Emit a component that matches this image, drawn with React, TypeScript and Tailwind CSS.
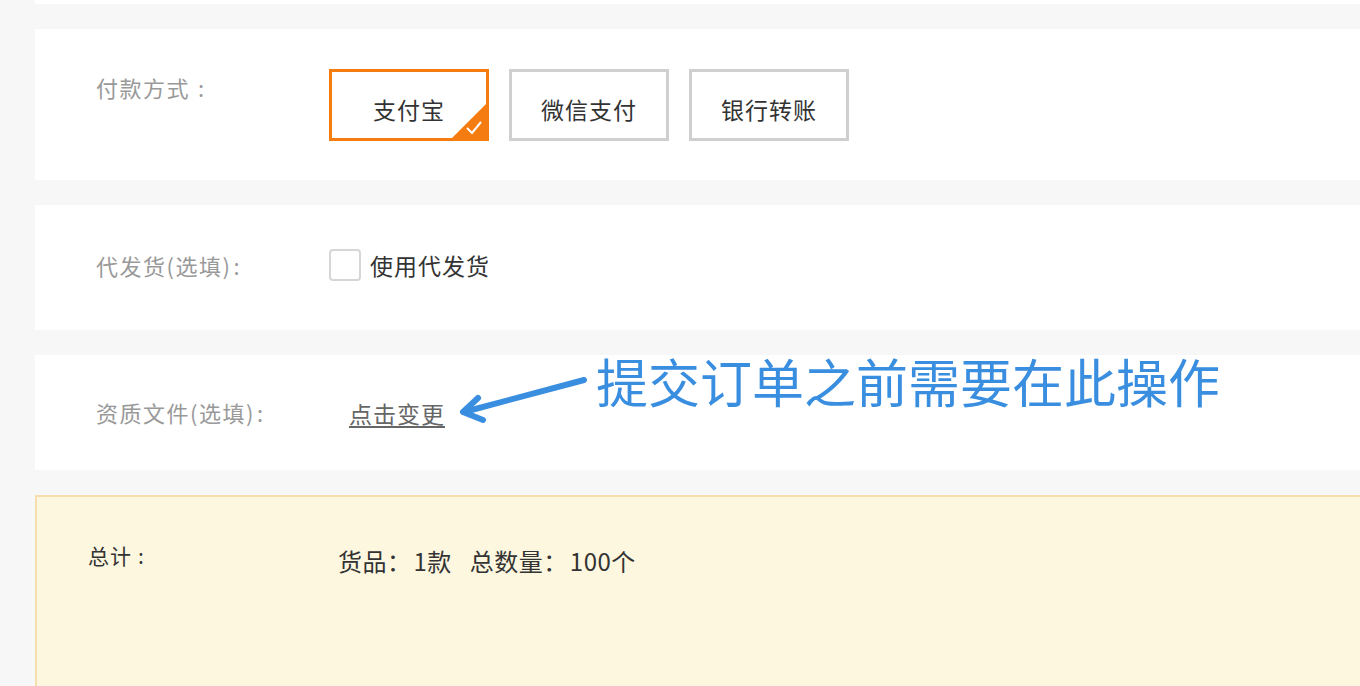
import React from 'react';

const font = { fontFamily: '"PingFang SC", "Noto Sans CJK SC", "Noto Sans", sans-serif' };

const PayOption = ({ label, active }: { label: string; active?: boolean }) => (
    <div
        className={`relative flex h-[72px] w-[160px] items-center justify-center pt-[8px] text-[23px] tracking-[1px] text-[#333] ${
            active ? 'border-[3px] border-[#f47c10]' : 'border-[3px] border-[#cfcfcf]'
        }`}
    >
        {label}
        {active && (
            <svg className="absolute bottom-0 right-0" width="34" height="34" viewBox="0 0 34 34">
                <polygon points="34,0 34,34 0,34" fill="#f47c10" />
                <path d="M15 24 L20 29 L29 18" stroke="#fff" strokeWidth="2" fill="none" />
            </svg>
        )}
    </div>
);

const Label = ({ text, colon = 'ml-[2px]' }: { text: string; colon?: string }) => (
    <div className="w-[294px] shrink-0 pl-[61px] text-[22px] tracking-[1.5px] text-[#999]">
        {text}
        <span className={colon}>:</span>
    </div>
);

export default function App() {
    return (
        <div className="relative min-h-[686px] overflow-hidden bg-[#f7f7f7] pl-[35px]" style={font}>
            <div className="h-[4px] bg-white" />

            <div className="mt-[25px] flex h-[151px] items-start bg-white">
                <div className="pt-[42px]">
                    <Label text="付款方式" colon="ml-[8px]" />
                </div>
                <div className="flex gap-[20px] pt-[40px]">
                    <PayOption label="支付宝" active />
                    <PayOption label="微信支付" />
                    <PayOption label="银行转账" />
                </div>
            </div>

            <div className="mt-[25px] flex h-[125px] items-center bg-white pb-[5px]">
                <Label text="代发货(选填)" />
                <label className="flex items-center gap-[9px] text-[23px] tracking-[1px] text-[#333]">
                    <span className="block h-[32px] w-[32px] rounded-[4px] border-2 border-[#d6d6d6] bg-white" />
                    使用代发货
                </label>
            </div>

            <div className="mt-[25px] flex h-[115px] items-center bg-white">
                <Label text="资质文件(选填)" />
                <a className="ml-[20px] mt-[2px] text-[23px] tracking-[1px] text-[#666] underline underline-offset-[3px]">
                    点击变更
                </a>
            </div>

            <div className="mt-[25px] h-[200px] border-l-2 border-t-2 border-[#f5dfae] bg-[#fdf7e0]">
                <div className="flex items-start pt-[43px]">
                    <div className="w-[301px] shrink-0 pl-[51px] text-[21px] tracking-[1px] text-[#333]">
                        总计<span className="ml-[6px]">:</span>
                    </div>
                    <div className="pt-[3px] text-[24px] tracking-[0.5px] text-[#333]">
                        货品：<span className="ml-[2px]">1款</span>
                        <span className="inline-block w-[18px]" />总数量：<span className="ml-[2px]">100个</span>
                    </div>
                </div>
            </div>

            <div className="absolute left-[596px] top-[346px] text-[52px] leading-[70px] text-[#3a8ee0]">
                提交订单之前需要在此操作
            </div>
            <svg className="absolute left-[450px] top-[370px]" width="150" height="60" viewBox="0 0 150 60">
                <path d="M134 10 L14 42" stroke="#3a8ee0" strokeWidth="6" strokeLinecap="round" fill="none" />
                <path d="M28 28 L13 42 L33 50" stroke="#3a8ee0" strokeWidth="6" strokeLinecap="round" strokeLinejoin="round" fill="none" />
            </svg>
        </div>
    );
}
